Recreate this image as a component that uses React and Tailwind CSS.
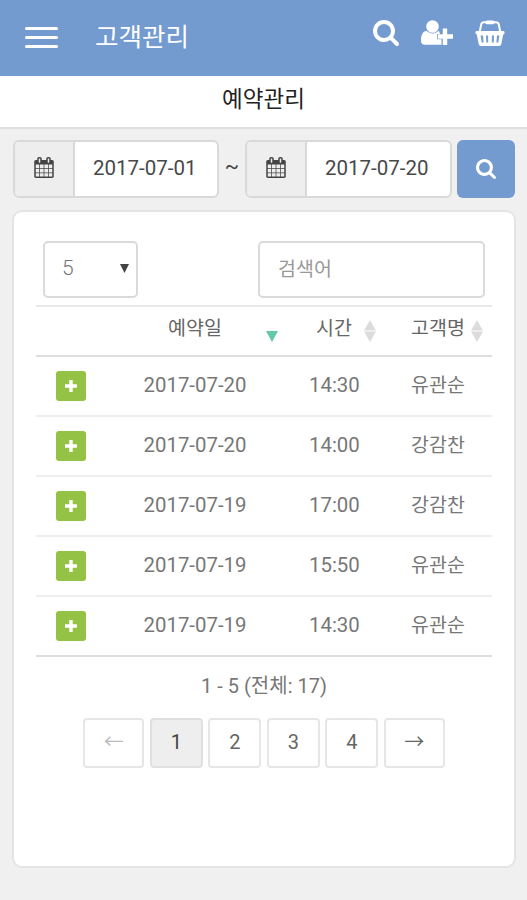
import React from 'react';

const ROWS = [
  { date: '2017-07-20', time: '14:30', name: '유관순' },
  { date: '2017-07-20', time: '14:00', name: '강감찬' },
  { date: '2017-07-19', time: '17:00', name: '강감찬' },
  { date: '2017-07-19', time: '15:50', name: '유관순' },
  { date: '2017-07-19', time: '14:30', name: '유관순' },
];

const COLS = 'grid grid-cols-[93px_132px_148px_83px]';

function SearchIcon({ className }) {
  return (
    <svg viewBox="64 128 1664 1664" fill="currentColor" className={className}>
      <path d="M1216 832q0-185-131.5-316.5t-316.5-131.5-316.5 131.5-131.5 316.5 131.5 316.5 316.5 131.5 316.5-131.5 131.5-316.5zm512 832q0 52-38 90t-90 38q-54 0-90-38l-343-342q-179 124-399 124-143 0-273.5-55.5t-225-150-150-225-55.5-273.5 55.5-273.5 150-225 225-150 273.5-55.5 273.5 55.5 225 150 150 225 55.5 273.5q0 220-124 399l343 343q37 37 37 90z" />
    </svg>
  );
}

function CalendarIcon() {
  return (
    <svg viewBox="64 0 1664 1792" fill="currentColor" className="h-[21px] w-5 text-[#444]">
      <path d="M192 1664h288v-288h-288v288zm352 0h320v-288h-320v288zm-352-352h288v-320h-288v320zm352 0h320v-320h-320v320zm-352-384h288v-288h-288v288zm736 736h320v-288h-320v288zm-384-736h320v-288h-320v288zm768 736h288v-288h-288v288zm-384-352h320v-320h-320v320zm-352-864v-288q0-13-9.5-22.5t-22.5-9.5h-64q-13 0-22.5 9.5t-9.5 22.5v288q0 13 9.5 22.5t22.5 9.5h64q13 0 22.5-9.5t9.5-22.5zm736 864h288v-320h-288v320zm-384-384h320v-288h-320v288zm384 0h288v-288h-288v288zm32-480v-288q0-13-9.5-22.5t-22.5-9.5h-64q-13 0-22.5 9.5t-9.5 22.5v288q0 13 9.5 22.5t22.5 9.5h64q13 0 22.5-9.5t9.5-22.5zm384-64v1280q0 52-38 90t-90 38h-1408q-52 0-90-38t-38-90v-1280q0-52 38-90t90-38h128v-96q0-66 47-113t113-47h64q66 0 113 47t47 113v96h384v-96q0-66 47-113t113-47h64q66 0 113 47t47 113v96h128q52 0 90 38t38 90z" />
    </svg>
  );
}

function UserPlusIcon() {
  return (
    <svg viewBox="0 0 32 26" fill="currentColor" className="h-[26px] w-8">
      <circle cx="11.5" cy="6.5" r="6.300" />
      <path d="M5.500 10.800C1.500 11.500 0 15.500 0 20.500C0 23.500 1.500 24.800 4 24.800H20.500V19.300H16.200V14H19C18.700 12.500 18.200 11.500 17.500 10.800C14 14.300 9 14.300 5.500 10.800Z" />
      <path d="M21.800 8.500H26.200V14.200H32V18.800H26.200V25H21.800V18.800H17V14.200H21.800Z" />
    </svg>
  );
}

function BasketIcon() {
  return (
    <svg viewBox="0 0 30 26" className="h-[26px] w-[30px]">
      <path d="M4.800 11.500L6.200 4.500Q6.700 2.300 9 2.300H21Q23.300 2.300 23.800 4.500L25.200 11.500" fill="none" stroke="currentColor" strokeWidth="2" />
      <rect x="10.500" y="0.500" width="9" height="3.800" rx="1.500" fill="currentColor" />
      <path
        fillRule="evenodd"
        fill="currentColor"
        d="M1.500 11H28.500Q29.600 11 29.600 12.700T28.200 14.500L26.300 24Q25.900 26 24 26H6Q4.100 26 3.700 24L1.800 14.500Q0.400 14.400 0.400 12.700T1.500 11ZM5.600 15.500L6.700 22.500H8.600L8 15.500ZM11 15.500L11.300 22.500H13.200L13.100 15.500ZM16.900 15.500L16.800 22.500H18.700L19 15.500ZM22 15.500L21.400 22.500H23.300L24.400 15.500Z"
      />
    </svg>
  );
}

function SortIcon() {
  return (
    <svg viewBox="0 0 12 22" className="h-[22px] w-3 text-[#dcdcdc]" fill="currentColor">
      <path d="M0 10.400L6 0L12 10.400ZM0 11.600L6 22L12 11.600Z" />
    </svg>
  );
}

function DateField({ value, className }) {
  return (
    <div className={`flex h-[58px] overflow-hidden rounded-md border-2 border-[#d9d9d9] bg-white ${className}`}>
      <div className="flex w-[60px] shrink-0 items-center justify-center border-r-2 border-[#d9d9d9] bg-[#eee] pb-1">
        <CalendarIcon />
      </div>
      <div className="flex flex-1 items-center pb-0.5 pl-[18px] text-[20.5px] text-[#484848]">{value}</div>
    </div>
  );
}

function PageButton({ children, className }) {
  return (
    <button className={`flex h-[50px] items-center justify-center rounded border-2 pb-0.5 text-xl ${className}`}>
      {children}
    </button>
  );
}

export default function App() {
  return (
    <div className="h-[900px] w-[527px] overflow-hidden bg-[#f0f0f0] font-['Roboto','Noto_Sans_CJK_KR',sans-serif] text-[#777]">
      {/* Top bar */}
      <header className="flex h-[76px] items-start bg-[#739bd0] text-white">
        <div className="mt-[27px] ml-[25px] flex w-[33px] flex-col gap-[6px]">
          <span className="h-[3px] rounded-full bg-white" />
          <span className="h-[3px] rounded-full bg-white" />
          <span className="h-[3px] rounded-full bg-white" />
        </div>
        <h1 className="mt-[19px] ml-[37px] text-[25.5px] leading-[36px]">고객관리</h1>
        <div className="mt-5 mr-[22px] ml-auto flex gap-[22px]">
          <SearchIcon className="h-[26px] w-[26px]" />
          <UserPlusIcon />
          <BasketIcon />
        </div>
      </header>

      <div className="h-[53px] border-b-2 border-[#dfdfdf] bg-white text-center text-[22.5px] leading-[46px] text-[#222]">
        예약관리
      </div>

      {/* Date range */}
      <div className="flex items-center pt-[11px] pl-[13px]">
        <DateField value="2017-07-01" className="w-[206px]" />
        <span className="w-[26px] pb-1 text-center text-[21px] text-[#444]">~</span>
        <DateField value="2017-07-20" className="w-[207px]" />
        <button className="ml-[5px] flex h-[58px] w-[58px] items-center justify-center rounded-md bg-[#739bd0] text-white">
          <SearchIcon className="h-5 w-5" />
        </button>
      </div>

      <main className="mt-3 ml-3 h-[658px] w-[504px] rounded-[10px] border-2 border-[#e4e4e4] bg-white px-[22px] pt-[29px]">
        <div className="flex justify-between pr-[7px] pl-[7px]">
          <div className="flex h-[57px] w-[95px] items-center justify-between rounded-[5px] border-2 border-[#dadada] pr-[7px] pb-0.5 pl-[17px] text-[21px] font-light">
            5
            <svg viewBox="0 0 9 9" className="h-[9px] w-[9px]" fill="#444">
              <path d="M0 0H9L4.500 9Z" />
            </svg>
          </div>
          <div className="flex h-[57px] w-[227px] items-center rounded-[5px] border-2 border-[#dadada] pl-[18px] text-[19.5px] text-[#999]">
            <span className="pt-px">검색어</span>
          </div>
        </div>

        {/* Reservation table */}
        <div className="mt-[7px] text-[20.4px]">
          <div className={`${COLS} h-[52px] border-t-2 border-b-2 border-t-[#e8e8e8] border-b-[#dedede] text-[19.5px] leading-[44px] text-[#666]`}>
            <div />
            <div className="text-center">예약일</div>
            <div className="flex">
              <svg viewBox="0 0 12 11" className="mt-[24px] ml-[5px] h-[11px] w-3 shrink-0" fill="#62c9a3">
                <path d="M0 0H12L6 11Z" />
              </svg>
              <span className="ml-[38px] w-[36px] whitespace-nowrap">시간</span>
              <div className="mt-[13px] ml-[12px]">
                <SortIcon />
              </div>
            </div>
            <div className="flex">
              <span className="ml-[2px] w-[54px] whitespace-nowrap">고객명</span>
              <div className="mt-[13px] ml-[6px]">
                <SortIcon />
              </div>
            </div>
          </div>
          {ROWS.map((row, idx) => (
            <div
              key={idx}
              className={`${COLS} h-[60px] items-center border-b-2 border-[#eee] last:border-[#dedede]`}
            >
              <div className="ml-5 flex h-[30px] w-[30px] items-center justify-center rounded-[3px] bg-[#93c244]">
                <svg viewBox="0 0 12 12" className="h-3 w-3" stroke="#fff" strokeWidth="3.400">
                  <path d="M6 0V12M0 6H12" />
                </svg>
              </div>
              <div className="pb-0.5 text-center">{row.date}</div>
              <div className="pb-0.5 pl-[48px]">{row.time}</div>
              <div className="pl-[2px] text-[19.5px]">{row.name}</div>
            </div>
          ))}
        </div>

        <div className="mt-[12px] text-center text-[20px] leading-[34px]">1 - 5 (전체: 17)</div>

        <div className="mt-[15px] flex justify-center gap-[5.5px] text-[#666]">
          <PageButton className="w-[61px] border-[#e6e6e6] text-[#bbb]">←</PageButton>
          <PageButton className="w-[53px] border-[#e0e0e0] bg-[#eee] text-[#444]">1</PageButton>
          <PageButton className="w-[53px] border-[#e6e6e6]">2</PageButton>
          <PageButton className="w-[53px] border-[#e6e6e6]">3</PageButton>
          <PageButton className="w-[53px] border-[#e6e6e6]">4</PageButton>
          <PageButton className="w-[61px] border-[#e6e6e6]">→</PageButton>
        </div>
      </main>
    </div>
  );
}
